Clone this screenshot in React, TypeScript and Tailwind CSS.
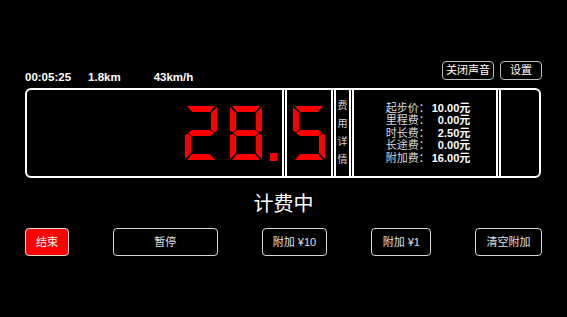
const font = "font-['Liberation_Sans','Noto_Sans_CJK_SC',sans-serif]";

// seven-segment display segments, in a 32x54 box
const segments: Record<string, string> = {
  a: "[clip-path:polygon(2px_0,30px_0,25px_6px,7px_6px)]",
  b: "[clip-path:polygon(26px_7px,32px_1px,32px_25px,29px_26px,26px_24px)]",
  c: "[clip-path:polygon(26px_30px,29px_28px,32px_29px,32px_53px,26px_47px)]",
  d: "[clip-path:polygon(7px_48px,25px_48px,30px_54px,2px_54px)]",
  e: "[clip-path:polygon(0_29px,3px_28px,6px_30px,6px_47px,0_53px)]",
  f: "[clip-path:polygon(0_1px,6px_7px,6px_24px,3px_26px,0_25px)]",
  g: "[clip-path:polygon(3px_27px,7px_24px,25px_24px,29px_27px,25px_30px,7px_30px)]",
};

const digitMap: Record<string, string[]> = {
  "0": ["a", "b", "c", "d", "e", "f"],
  "1": ["b", "c"],
  "2": ["a", "b", "g", "e", "d"],
  "3": ["a", "b", "g", "c", "d"],
  "4": ["f", "g", "b", "c"],
  "5": ["a", "f", "g", "c", "d"],
  "6": ["a", "f", "g", "e", "c", "d"],
  "7": ["a", "b", "c"],
  "8": ["a", "b", "c", "d", "e", "f", "g"],
  "9": ["a", "b", "c", "d", "f", "g"],
};

function Digit({ d }: { d: string }) {
  return (
    <div className="relative w-[32px] h-[54px] shrink-0">
      {digitMap[d].map((s) => (
        <div key={s} className={`absolute inset-0 bg-[#ff0000] ${segments[s]}`} />
      ))}
    </div>
  );
}

const fees = [
  { label: "起步价：", value: "10.00元" },
  { label: "里程费：", value: "0.00元" },
  { label: "时长费：", value: "2.50元" },
  { label: "长途费：", value: "0.00元" },
  { label: "附加费：", value: "16.00元" },
];

export default function App() {
  return (
    <div className={`w-[567px] h-[317px] bg-black text-white px-[25px] pt-[61px] ${font}`}>
      {/* top row */}
      <div className="flex justify-between items-start h-[19px]">
        <div className="flex pt-[9px] text-[11.5px] leading-[14px] font-bold">
          <span>00:05:25</span>
          <span className="ml-[17px]">1.8km</span>
          <span className="ml-[33px]">43km/h</span>
        </div>
        <div className="flex gap-[6px] text-[11px]">
          <button className="w-[52px] h-[19px] border border-[#bdbdbd] rounded-[4px] flex items-center justify-center">关闭声音</button>
          <button className="w-[42px] h-[19px] border border-[#bdbdbd] rounded-[4px] flex items-center justify-center">设置</button>
        </div>
      </div>

      {/* meter panel */}
      <div className="mt-[8px] w-[516px] h-[90px] border-2 border-white rounded-[6px] flex gap-[1px]">
        <div
          role="img"
          aria-label="28.5"
          className="flex-1 border-r-2 border-white flex items-center justify-end pr-[5px]"
        >
          <Digit d="2" />
          <div className="ml-[13px]"><Digit d="8" /></div>
          <div className="ml-[8px] self-end mb-[15px] w-[7px] h-[8px] bg-[#ff0000]" />
        </div>
        <div className="w-[48px] border-x-2 border-white flex items-center justify-center">
          <Digit d="5" />
        </div>
        <div className="w-[17px] border-x-2 border-white flex flex-col items-center justify-center text-[10px] leading-[18px] text-[#d0d0d0]">
          <span>费</span>
          <span>用</span>
          <span>详</span>
          <span>情</span>
        </div>
        <div className="w-[146px] border-x-2 border-white flex items-center justify-center pl-[6px]">
          <div className="grid grid-cols-[auto_auto] gap-x-[2px] text-[11px] leading-[12.5px]">
            {fees.map((f) => (
              <div key={f.label} className="contents">
                <span className="text-[#dcdcdc]">{f.label}</span>
                <span className="text-right font-bold">{f.value}</span>
              </div>
            ))}
          </div>
        </div>
        <div className="w-[40px] border-l-2 border-white" />
      </div>

      <div className="mt-[14px] text-center text-[20px] leading-[24px]">计费中</div>

      {/* actions */}
      <div className="mt-[12px] flex gap-[44px] text-[11px] text-[#e0e0e0]">
        <button className="w-[44px] h-[28px] bg-[#ff0000] text-white border border-[#d8d8d8] rounded-[4px]">结束</button>
        <button className="w-[105px] h-[28px] border border-[#d8d8d8] rounded-[4px]">暂停</button>
        <button className="w-[66px] h-[28px] border border-[#d8d8d8] rounded-[4px]">附加 ¥10</button>
        <button className="w-[60px] h-[28px] border border-[#d8d8d8] rounded-[4px]">附加 ¥1</button>
        <button className="w-[67px] h-[28px] border border-[#d8d8d8] rounded-[4px]">清空附加</button>
      </div>
    </div>
  );
}
